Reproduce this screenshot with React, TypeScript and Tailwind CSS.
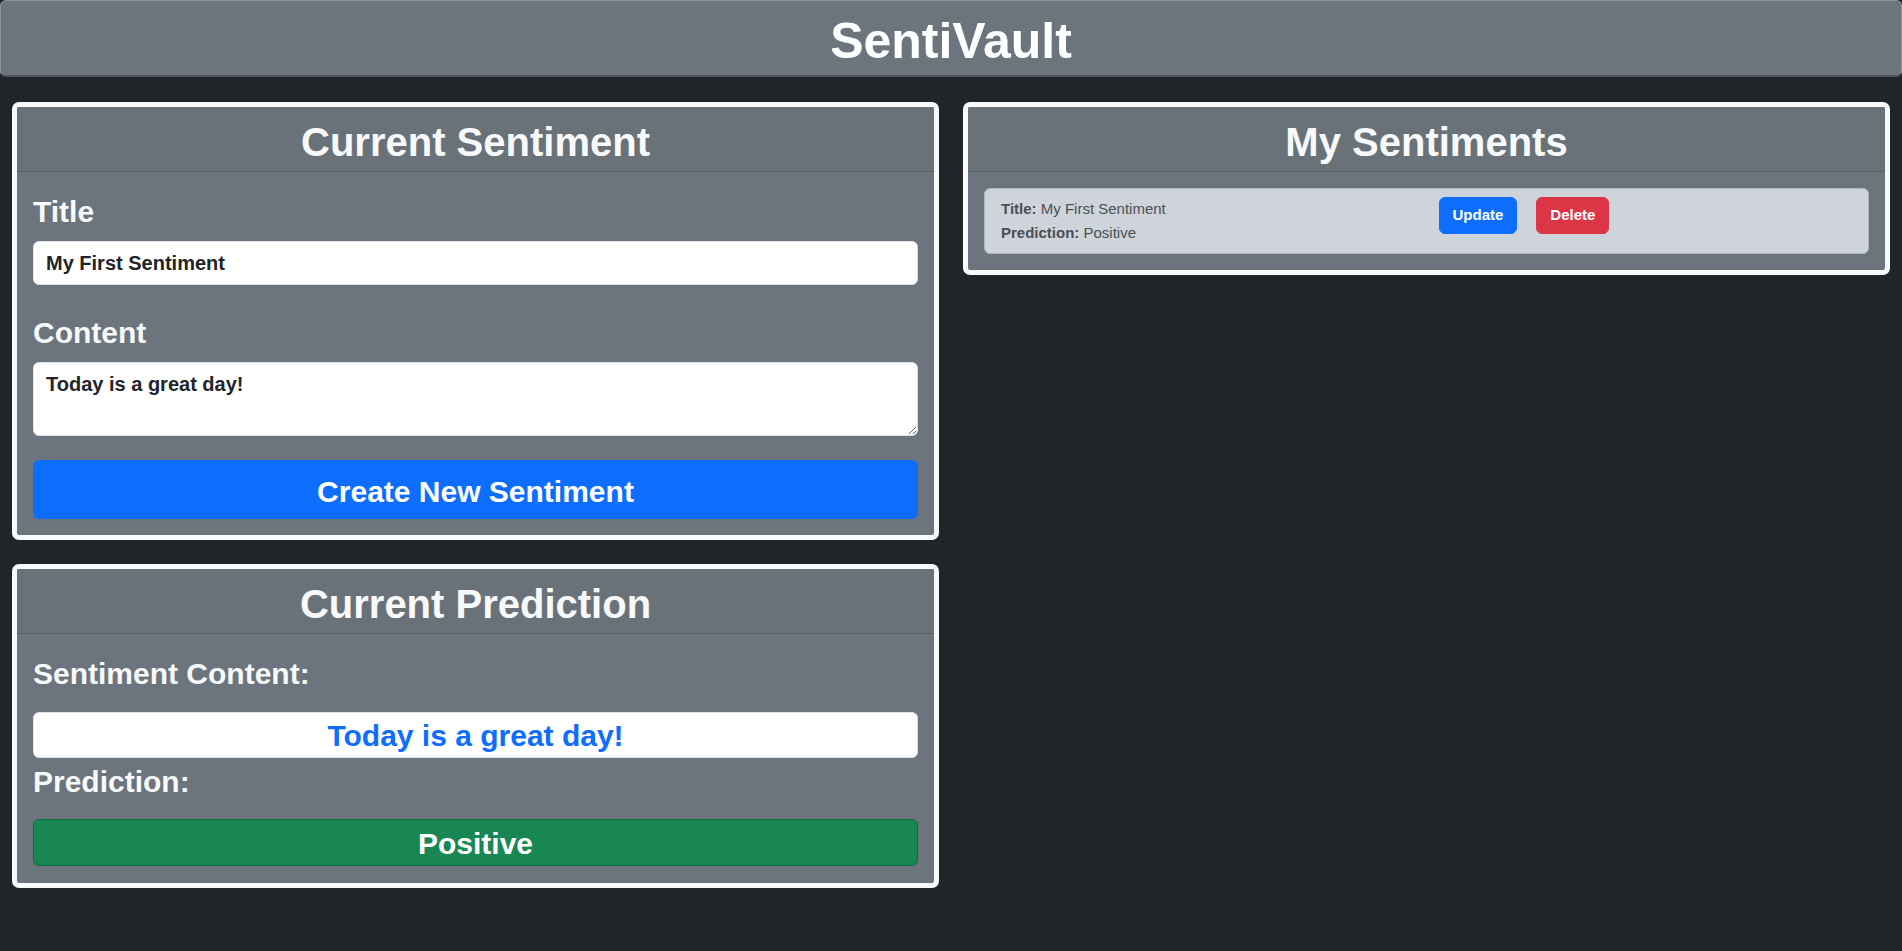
import { ReactNode } from 'react';

const Card = ({ title, children, className = '' }: { title: string; children: ReactNode; className?: string }) => (
  <section className="bg-[#6c757d] border-[5px] border-[#f8f9fa] rounded-[7px] overflow-hidden">
    <div className="h-[65px] border-b border-[#596067] bg-[#6a7279] pt-[11px] text-center">
      <h2 className="text-[40px] leading-[48px] font-bold text-[#f8f9fa]">{title}</h2>
    </div>
    <div className={`px-[16px] pt-[16px] ${className}`}>{children}</div>
  </section>
);

const Label = ({ children, className = '' }: { children: ReactNode; className?: string }) => (
  <h3 className={`text-[30px] leading-[36px] font-bold text-[#f8f9fa] ${className}`}>{children}</h3>
);

const App = () => {
  return (
    <div className="min-h-screen bg-[#212529] font-['Liberation_Sans',Arial,sans-serif]">
      <header className="h-[77px] flex items-center justify-center bg-[#6c757d] border border-[#8f969d] border-b-2 border-b-[#4f565d] rounded-[6px] pt-[5px]">
        <h1 className="text-[50px] leading-[58px] font-bold text-white">SentiVault</h1>
      </header>

      <main className="px-[12px] pt-[25px] grid grid-cols-2 gap-x-[24px] items-start">
        <div className="flex flex-col gap-[24px]">
          <Card title="Current Sentiment" className="pb-[16px]">
            <Label className="mt-[6px]">Title</Label>
            <input
              className="mt-[11px] block w-full h-[44px] rounded-[6px] border border-[#dee2e6] bg-white px-[12px] text-[20px] leading-[30px] font-bold text-[#212529] outline-none"
              defaultValue="My First Sentiment"
            />
            <Label className="mt-[30px]">Content</Label>
            <textarea
              className="mt-[11px] block w-full h-[74px] rounded-[6px] border border-[#dee2e6] bg-white px-[12px] py-[6px] text-[20px] leading-[30px] font-bold text-[#212529] outline-none"
              defaultValue="Today is a great day!"
            />
            <button
              type="button"
              className="mt-[24px] block w-full h-[59px] rounded-[6px] bg-[#0d6efd] pt-[9px] pb-[5px] text-[30px] leading-[45px] font-bold text-white"
            >
              Create New Sentiment
            </button>
          </Card>

          <Card title="Current Prediction" className="pb-[17px]">
            <Label className="mt-[6px]">Sentiment Content:</Label>
            <div className="mt-[20px] h-[46px] flex items-center justify-center pt-[2px] rounded-[6px] border border-[#dee2e6] bg-white text-[30px] leading-[36px] font-bold text-[#0d6efd]">
              Today is a great day!
            </div>
            <Label className="mt-[6px]">Prediction:</Label>
            <div className="mt-[19px] h-[47px] flex items-center justify-center pt-[2px] rounded-[6px] border border-[#146c43] bg-[#198754] text-[30px] leading-[36px] font-bold text-white">
              Positive
            </div>
          </Card>
        </div>

        <Card title="My Sentiments" className="pb-[16px]">
          <div className="grid grid-cols-2 rounded-[6px] border border-[#adb5bd] bg-[#ced4da] px-[16px] pt-[8px] pb-[8px]">
            <div className="text-[15px] leading-[24px] text-[#495057]">
              <div>
                <span className="font-bold">Title:</span> My First Sentiment
              </div>
              <div>
                <span className="font-bold">Prediction:</span> Positive
              </div>
            </div>
            <div className="pl-[12px] flex items-start gap-[19px]">
              <button
                type="button"
                className="h-[37px] px-[13px] rounded-[6px] border border-[#0d6efd] bg-[#0d6efd] text-[15px] font-bold text-white"
              >
                Update
              </button>
              <button
                type="button"
                className="h-[37px] px-[13px] rounded-[6px] border border-[#dc3545] bg-[#dc3545] text-[15px] font-bold text-white"
              >
                Delete
              </button>
            </div>
          </div>
        </Card>
      </main>
    </div>
  );
};

export default App;
